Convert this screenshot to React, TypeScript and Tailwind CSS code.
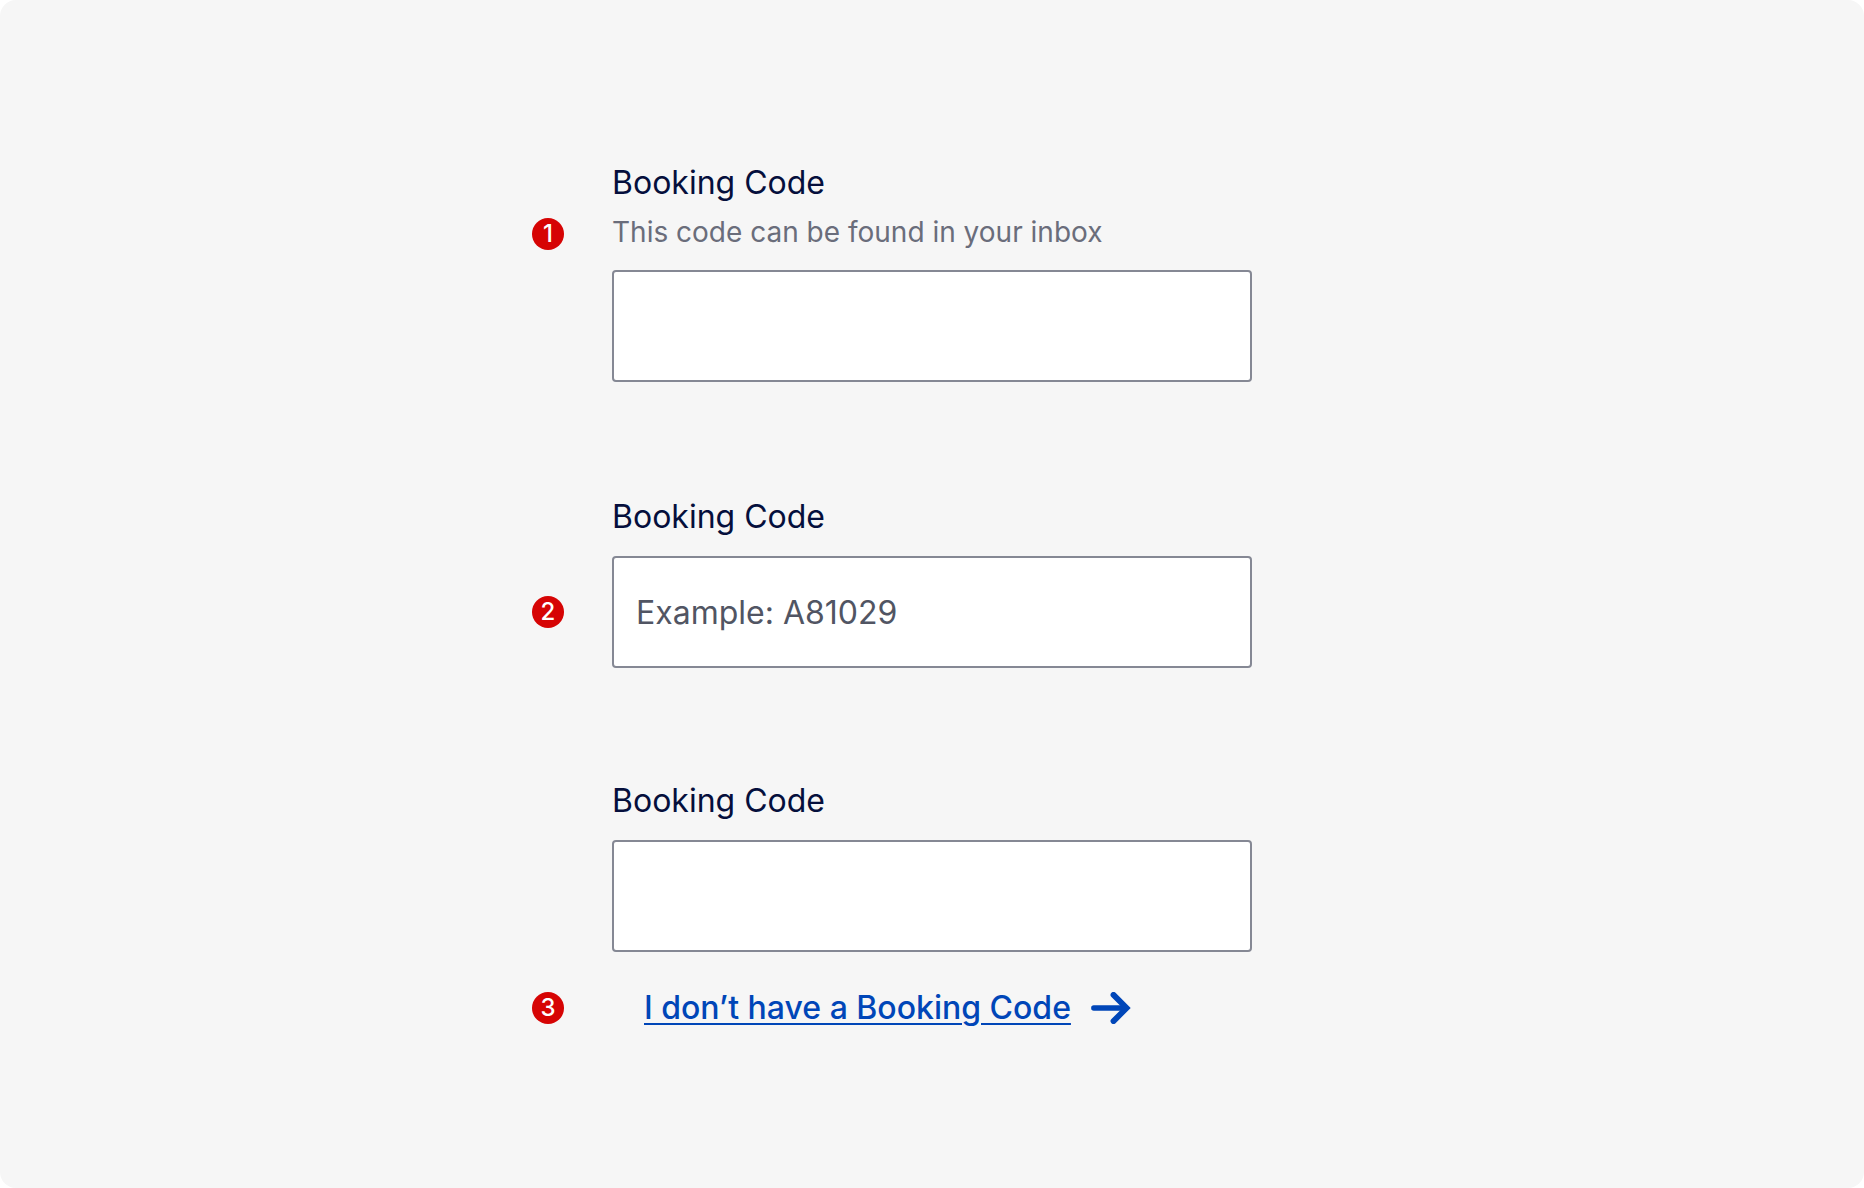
import type { ReactNode } from "react";

function Marker({ number }: { number: number }) {
  return (
    <span className="flex size-8 shrink-0 items-center justify-center rounded-full bg-[#d60404] text-2xl font-medium text-white">
      {number}
    </span>
  );
}

function MarkedRow({ number, children }: { number: number; children: ReactNode }) {
  return (
    <div className="flex items-center gap-12">
      <Marker number={number} />
      {children}
    </div>
  );
}

function FieldLabel({ htmlFor }: { htmlFor: string }) {
  return (
    <label htmlFor={htmlFor} className="ml-20 block text-[32px] leading-[42px] text-[#050f3c]">
      Booking Code
    </label>
  );
}

const inputStyle =
  "h-28 w-full min-w-0 rounded border-2 border-[#858894] bg-white px-[22px] text-[32px] text-[#515563] placeholder:text-[#515563] placeholder:opacity-100";

export default function App() {
  return (
    <main className="min-h-screen overflow-hidden rounded-2xl bg-[#f6f6f6] px-8 pt-[162px] pb-40 font-['Inter',sans-serif]">
      <form className="mx-auto flex max-w-[800px] flex-col gap-28 pr-20">
        <div className="pb-0.5">
          <FieldLabel htmlFor="code-hint" />
          <div className="mt-[14px] mb-5">
            <MarkedRow number={1}>
              <p id="hint" className="pb-1 text-[28px] leading-7 text-[#6a6d7b]">
                This code can be found in your inbox
              </p>
            </MarkedRow>
          </div>
          <div className="pl-20">
            <input id="code-hint" type="text" aria-describedby="hint" className={inputStyle} />
          </div>
        </div>

        <div>
          <FieldLabel htmlFor="code-placeholder" />
          <div className="mt-[18px]">
            <MarkedRow number={2}>
              <input id="code-placeholder" type="text" placeholder="Example: A81029" className={inputStyle} />
            </MarkedRow>
          </div>
        </div>

        <div>
          <FieldLabel htmlFor="code-link" />
          <div className="mt-[18px] mb-10 pl-20">
            <input id="code-link" type="text" className={inputStyle} />
          </div>
          <MarkedRow number={3}>
            <a href="#" className="ml-8 flex items-center gap-5 text-[32px] leading-8 font-medium text-[#0046b8]">
              <span className="underline decoration-2 underline-offset-4">I don’t have a Booking Code</span>
              <svg viewBox="0 0 40 32" className="h-8 w-10 shrink-0" aria-hidden="true">
                <path d="M2.8 16H34" fill="none" stroke="currentColor" strokeWidth="5.4" strokeLinecap="round" />
                <path d="M22.5 2.9L35.6 16L22.5 29.1" fill="none" stroke="currentColor" strokeWidth="5.8" strokeLinecap="round" />
              </svg>
            </a>
          </MarkedRow>
        </div>
      </form>
    </main>
  );
}
